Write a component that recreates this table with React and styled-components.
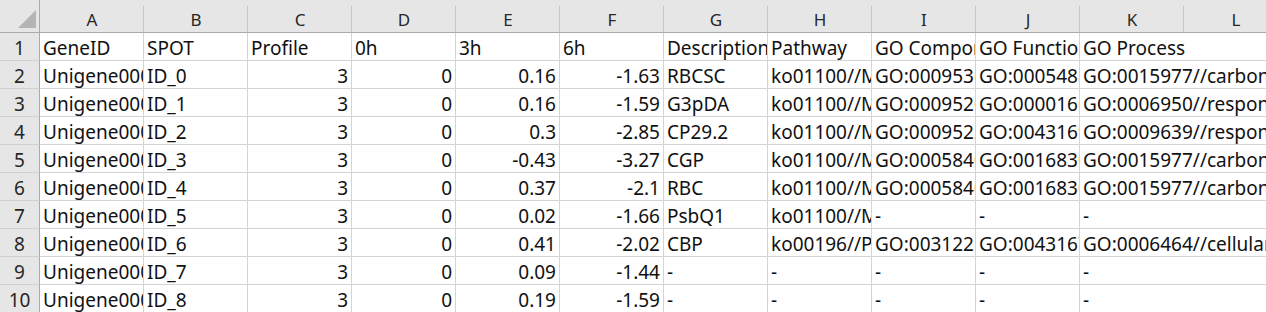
import React from 'react'
import styled, { createGlobalStyle } from 'styled-components'

const GlobalStyle = createGlobalStyle`
    html, body {
        margin: 0;
        padding: 0;
        background: #ffffff;
    }
    body {
        font-family: "Noto Sans", "Liberation Sans", Arial, sans-serif;
    }
`

const COLS = ['A', 'B', 'C', 'D', 'E', 'F', 'G', 'H', 'I', 'J', 'K', 'L']

// numbers are right aligned, strings left aligned and spill into an empty neighbour
const ROWS = [
    ['GeneID', 'SPOT', 'Profile', '0h', '3h', '6h', 'Description', 'Pathway', 'GO Component', 'GO Function', 'GO Process', ''],
    ['Unigene0000192', 'ID_0', 3, 0, 0.16, -1.63, 'RBCSC', 'ko01100//Metabolic pathways', 'GO:0009536//plastid', 'GO:0005488//binding', 'GO:0015977//carbon fixation', ''],
    ['Unigene0000473', 'ID_1', 3, 0, 0.16, -1.59, 'G3pDA', 'ko01100//Metabolic pathways', 'GO:0009526//plastid envelope', 'GO:0000166//nucleotide binding', 'GO:0006950//response to stress', ''],
    ['Unigene0000518', 'ID_2', 3, 0, 0.3, -2.85, 'CP29.2', 'ko01100//Metabolic pathways', 'GO:0009522//photosystem I', 'GO:0043169//cation binding', 'GO:0009639//response to red or far red light', ''],
    ['Unigene0000761', 'ID_3', 3, 0, -0.43, -3.27, 'CGP', 'ko01100//Metabolic pathways', 'GO:0005840//ribosome', 'GO:0016830//carbon-carbon lyase activity', 'GO:0015977//carbon fixation', ''],
    ['Unigene0000894', 'ID_4', 3, 0, 0.37, -2.1, 'RBC', 'ko01100//Metabolic pathways', 'GO:0005840//ribosome', 'GO:0016830//carbon-carbon lyase activity', 'GO:0015977//carbon fixation', ''],
    ['Unigene0001027', 'ID_5', 3, 0, 0.02, -1.66, 'PsbQ1', 'ko01100//Metabolic pathways', '-', '-', '-', ''],
    ['Unigene0001153', 'ID_6', 3, 0, 0.41, -2.02, 'CBP', 'ko00196//Photosynthesis - antenna proteins', 'GO:0031225//anchored component of membrane', 'GO:0043167//ion binding', 'GO:0006464//cellular protein modification process', ''],
    ['Unigene0001290', 'ID_7', 3, 0, 0.09, -1.44, '-', '-', '-', '-', '-', ''],
    ['Unigene0001346', 'ID_8', 3, 0, 0.19, -1.59, '-', '-', '-', '-', '-', ''],
]

const Sheet = styled.div`
    width: 1266px;
    height: 312px;
    overflow: hidden;
    background: #ffffff;
`

const Grid = styled.div`
    display: grid;
    grid-template-columns: 40px repeat(12, 104px);
    grid-template-rows: 33px repeat(10, 28px);
    width: max-content;
`

const Corner = styled.div`
    position: relative;
    box-sizing: border-box;
    background: #e6e6e6;
    border-right: 1px solid #ababab;
    border-bottom: 1px solid #ababab;

    &::after {
        content: "";
        position: absolute;
        right: 3px;
        bottom: 4px;
        width: 0;
        height: 0;
        border-left: 18px solid transparent;
        border-bottom: 18px solid #b4b4b4;
    }
`

const ColHead = styled.div`
    position: relative;
    box-sizing: border-box;
    display: flex;
    align-items: flex-end;
    justify-content: center;
    padding-bottom: 2px;
    background: #e6e6e6;
    border-bottom: 1px solid #ababab;
    color: #262626;
    font-size: 17px;
    line-height: 20px;

    &::after {
        content: "";
        position: absolute;
        right: 0;
        top: 6px;
        bottom: 0;
        width: 1px;
        background: #c6c6c6;
    }
`

const RowHead = styled.div`
    box-sizing: border-box;
    display: flex;
    align-items: flex-end;
    justify-content: center;
    padding-bottom: 1px;
    background: #e6e6e6;
    border-right: 1px solid #ababab;
    border-bottom: 1px solid #d0d0d0;
    color: #262626;
    font-size: 19px;
    line-height: 22px;
`

const Cell = styled.div`
    position: relative;
    box-sizing: border-box;
    display: flex;
    align-items: flex-end;
    justify-content: ${(p) => (p.$num ? 'flex-end' : 'flex-start')};
    padding: 0 3px 1px 3px;
    border-right: ${(p) => (p.$spill ? 'none' : '1px solid #d4d4d4')};
    border-bottom: 1px solid #d4d4d4;
    overflow: ${(p) => (p.$spill ? 'visible' : 'hidden')};
    white-space: nowrap;
    color: #111111;
    font-size: 19px;
    line-height: 22px;
    z-index: ${(p) => (p.$spill ? 1 : 0)};
`

function SheetRow({ index, values }) {
    return (
        <>
            <RowHead>{index}</RowHead>
            {values.map((v, i) => {
                const num = typeof v === 'number'
                const next = values[i + 1]
                const spill = !num && v !== '' && (next === '' || next === undefined)
                return (
                    <Cell key={i} $num={num} $spill={spill}>
                        {v}
                    </Cell>
                )
            })}
        </>
    )
}

export default function App() {
    return (
        <Sheet>
            <GlobalStyle />
            <Grid>
                <Corner />
                {COLS.map((c) => (
                    <ColHead key={c}>{c}</ColHead>
                ))}
                {ROWS.map((r, i) => (
                    <SheetRow key={i} index={i + 1} values={r} />
                ))}
            </Grid>
        </Sheet>
    )
}
